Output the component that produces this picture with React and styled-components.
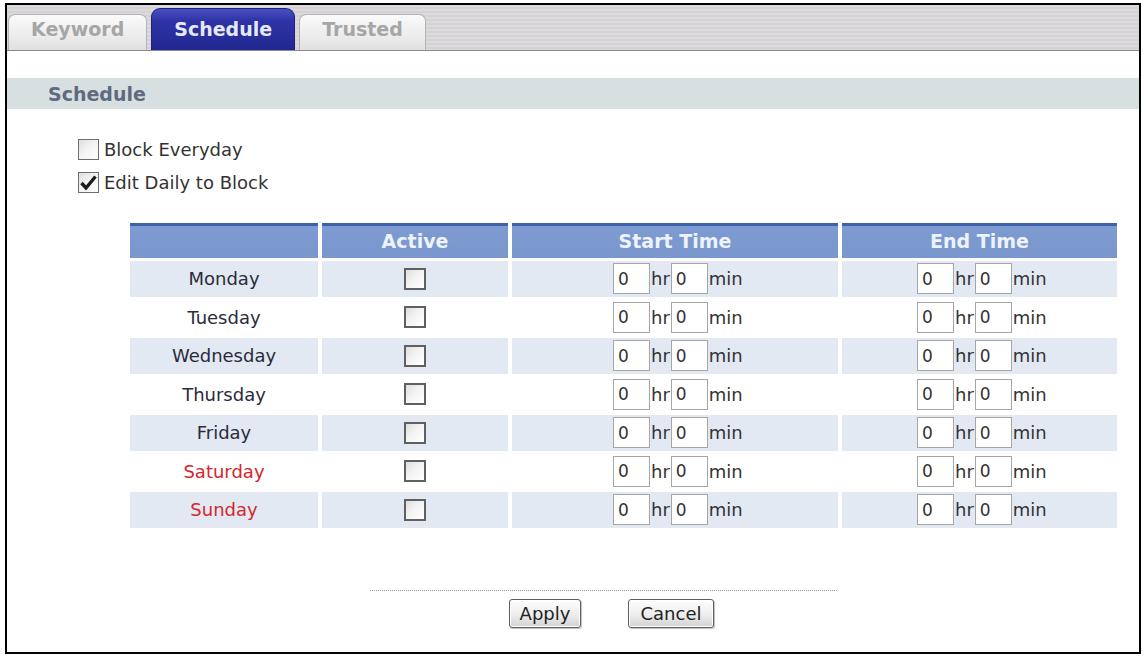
import React from "react";
import styled, { createGlobalStyle } from "styled-components";

const GlobalStyle = createGlobalStyle`
  html, body {
    margin: 0;
    padding: 0;
    background: #fff;
  }
  body {
    font-family: "DejaVu Sans", Verdana, sans-serif;
    font-size: 18px;
    color: #2a2a3a;
  }
`;

const Page = styled.div`
  padding: 3px 0 0 5px;
`;

const Frame = styled.div`
  width: 1136px;
  height: 651px;
  box-sizing: border-box;
  border: 2px solid #000;
  background: #fff;
  overflow: hidden;
`;

// tabs along the top
const TabBar = styled.div`
  height: 45px;
  display: flex;
  align-items: flex-end;
  gap: 4px;
  padding-left: 1px;
  border-bottom: 1px solid #8a8a8a;
  background: repeating-linear-gradient(
    to bottom,
    #dddadd 0,
    #dddadd 2px,
    #d5d2d6 2px,
    #d5d2d6 4px
  );
`;

const Tab = styled.div`
  box-sizing: border-box;
  height: ${(p) => (p.$active ? "42px" : "36px")};
  padding: 0 22px 10px;
  display: flex;
  align-items: flex-end;
  font-weight: bold;
  font-size: 19px;
  line-height: 22px;
  border-radius: ${(p) => (p.$active ? "9px 9px 0 0" : "7px 7px 0 0")};
  border: 1px solid ${(p) => (p.$active ? "#1d2170" : "#b4b2b4")};
  border-bottom: none;
  color: ${(p) => (p.$active ? "#e6e8f6" : "#a6a6a6")};
  background: ${(p) =>
    p.$active
      ? "linear-gradient(to bottom, #4a50c0 0%, #2d33a6 30%, #22288f 100%)"
      : "linear-gradient(to bottom, #fafafa 0%, #ececec 60%, #e0e0e0 100%)"};
`;

const SectionBar = styled.div`
  margin-top: 27px;
  height: 31px;
  display: flex;
  align-items: center;
  padding-left: 41px;
  background: #d8dfe1;
  font-weight: bold;
  font-size: 19px;
  color: #5f6a80;
`;

const Options = styled.div`
  margin-top: 30px;
  padding-left: 71px;
  display: flex;
  flex-direction: column;
  gap: 12px;
`;

const OptionRow = styled.label`
  display: flex;
  align-items: center;
  gap: 5px;
  height: 21px;
  color: #333;
`;

const Box = styled.span`
  box-sizing: border-box;
  width: ${(p) => p.$size}px;
  height: ${(p) => p.$size}px;
  border: ${(p) => (p.$heavy ? "2px solid #606060" : "1px solid #6e6e6e")};
  background: linear-gradient(135deg, #dedede 0%, #f3f3f3 45%, #ffffff 100%);
  display: inline-flex;
  align-items: center;
  justify-content: center;
  vertical-align: middle;
`;

const Grid = styled.table`
  margin: 27px 0 0 119px;
  border-collapse: separate;
  border-spacing: 4px 3px;
  table-layout: fixed;
`;

const HeadCell = styled.th`
  width: ${(p) => p.$w}px;
  height: 35px;
  padding: 0;
  font-size: 19px;
  font-weight: bold;
  color: #eef2fb;
  text-align: center;
  background: linear-gradient(
    to bottom,
    #3f62ad 0,
    #3f62ad 3px,
    #7d9bd1 3px,
    #7a97cd 100%
  );
`;

const Row = styled.tr`
  td {
    background: ${(p) => (p.$shaded ? "#e2e9f3" : "transparent")};
  }
`;

const DayCell = styled.td`
  height: 35.5px;
  padding: 0;
  text-align: center;
  color: ${(p) => (p.$weekend ? "#d5262c" : "#2b2b3b")};
`;

const CheckCell = styled.td`
  padding: 0;
  text-align: center;
  line-height: 0;
`;

const TimeCell = styled.td`
  padding: 0 0 0 ${(p) => p.$indent}px;
`;

const TimeGroup = styled.div`
  display: flex;
  align-items: center;
  gap: 1px;
  font-size: 18px;
  color: #333;
`;

const TimeInput = styled.input`
  box-sizing: border-box;
  width: 37px;
  height: 31px;
  padding: 0 4px;
  margin: 0;
  border: 1px solid #a6a6a6;
  background: #fff;
  font-family: inherit;
  font-size: 17px;
  color: #333;
  outline: none;
`;

const Footer = styled.div`
  margin: 59px 0 0 363px;
  width: 467px;
`;

const Dotted = styled.div`
  border-top: 1px dotted #9c9c9c;
`;

const Buttons = styled.div`
  display: flex;
  gap: 47px;
  margin-top: 8px;
  padding-left: 139px;
`;

const Button = styled.button`
  box-sizing: border-box;
  height: 29px;
  width: ${(p) => p.$w}px;
  padding: 0;
  font-family: inherit;
  font-size: 18px;
  color: #222;
  border: 1px solid #5e5e5e;
  border-radius: 3px;
  background: linear-gradient(to bottom, #fdfdfd 0%, #ededed 55%, #d2d2d2 100%);
  box-shadow: inset 0 0 0 1px #fff, 1px 1px 1px rgba(0, 0, 0, 0.25);
`;

const Check = () => (
  <svg width="17" height="16" viewBox="0 0 17 16">
    <path d="M1.5 8 L6 13 L15.5 1.5" fill="none" stroke="#1c1c1c" strokeWidth="3.4" />
  </svg>
);

const days = [
  "Monday",
  "Tuesday",
  "Wednesday",
  "Thursday",
  "Friday",
  "Saturday",
  "Sunday",
];

const Time = () => (
  <TimeGroup>
    <TimeInput defaultValue="0" />
    hr
    <TimeInput defaultValue="0" />
    min
  </TimeGroup>
);

const App = () => {
  return (
    <Page>
      <GlobalStyle />
      <Frame>
        <TabBar>
          <Tab>Keyword</Tab>
          <Tab $active>Schedule</Tab>
          <Tab>Trusted</Tab>
        </TabBar>

        <SectionBar>Schedule</SectionBar>

        <Options>
          <OptionRow>
            <Box $size={21} />
            Block Everyday
          </OptionRow>
          <OptionRow>
            <Box $size={21}>
              <Check />
            </Box>
            Edit Daily to Block
          </OptionRow>
        </Options>

        <Grid>
          <thead>
            <tr>
              <HeadCell $w={188} />
              <HeadCell $w={186}>Active</HeadCell>
              <HeadCell $w={326}>Start Time</HeadCell>
              <HeadCell $w={275}>End Time</HeadCell>
            </tr>
          </thead>
          <tbody>
            {days.map((d, i) => (
              <Row key={d} $shaded={i % 2 === 0}>
                <DayCell $weekend={i >= 5}>{d}</DayCell>
                <CheckCell>
                  <Box $size={22} $heavy />
                </CheckCell>
                <TimeCell $indent={101}>
                  <Time />
                </TimeCell>
                <TimeCell $indent={75}>
                  <Time />
                </TimeCell>
              </Row>
            ))}
          </tbody>
        </Grid>

        <Footer>
          <Dotted />
          <Buttons>
            <Button $w={72}>Apply</Button>
            <Button $w={86}>Cancel</Button>
          </Buttons>
        </Footer>
      </Frame>
    </Page>
  );
};

export default App;
